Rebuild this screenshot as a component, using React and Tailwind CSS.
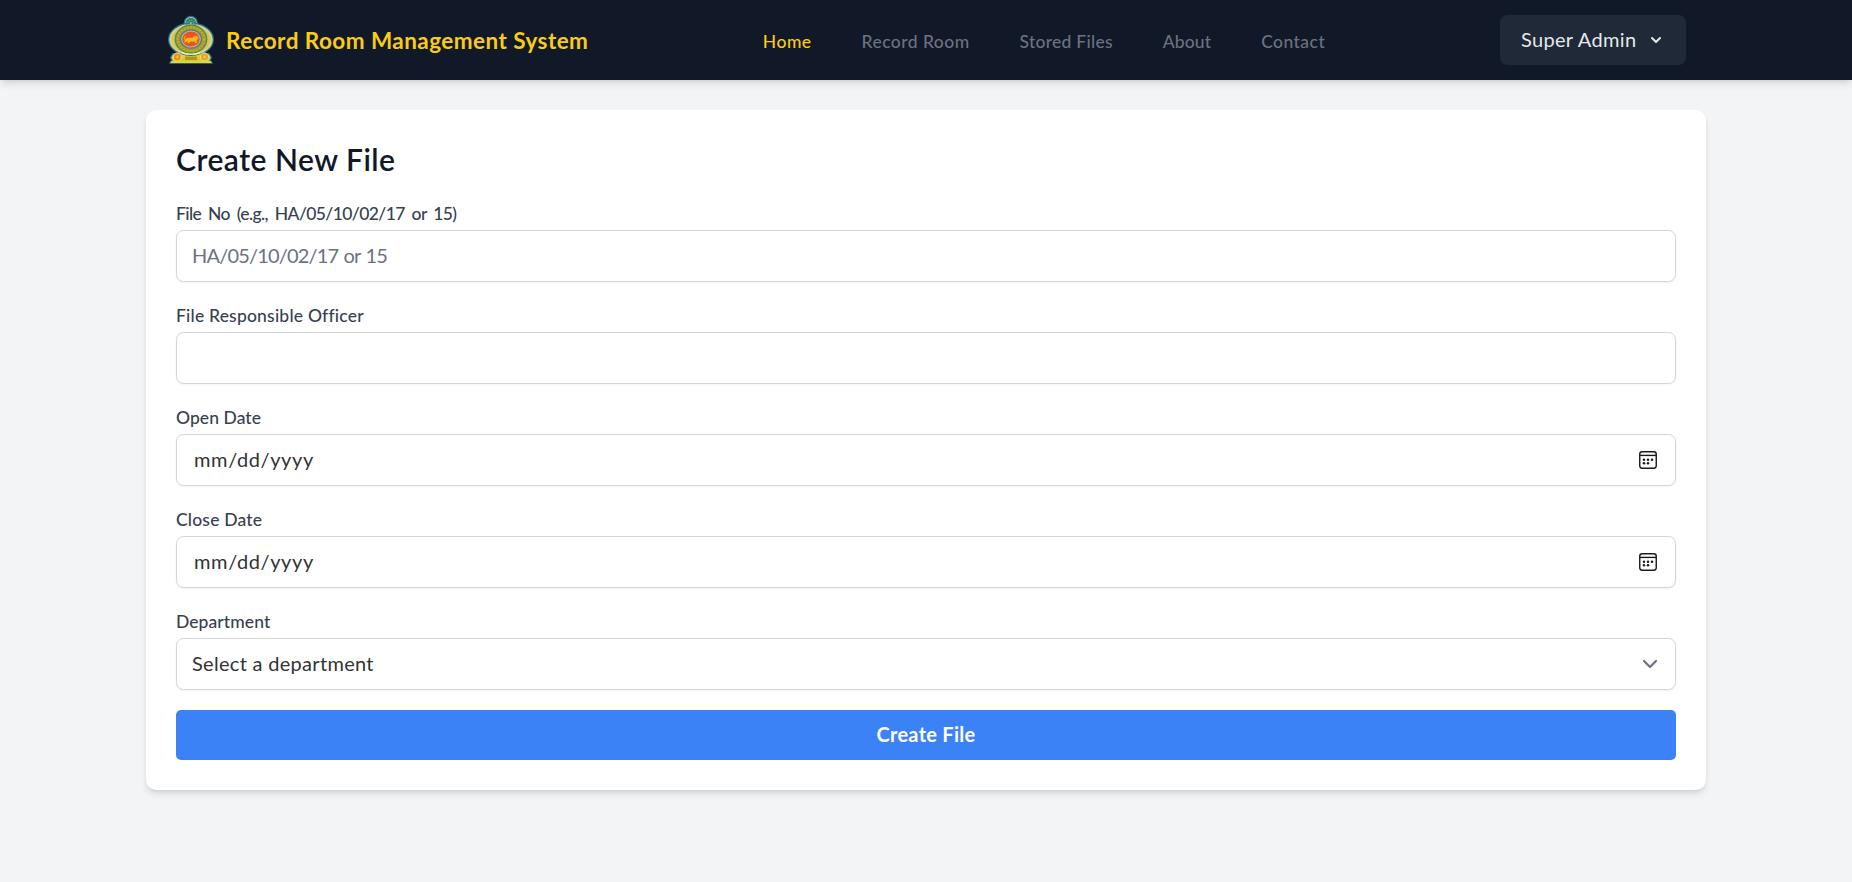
function Emblem() {
  return (
    <svg viewBox="0 0 50 50" className="h-[50px] w-[50px] shrink-0">
      <g stroke="#1d6f9c" strokeWidth="1.2">
        <circle cx="24.8" cy="8" r="6.6" fill="#d9cf6b" />
        <ellipse cx="25" cy="24.5" rx="22.4" ry="16.4" fill="#d2c766" />
        <path d="M4 48.2 6 45.6 4.6 42.5 7 38.5l7 .5 4 1.5h14l4-1.5 7-.5 2.4 4-1.4 3.1 2 2.6z" fill="#d9c93c" />
      </g>
      <circle cx="24.8" cy="8" r="5.3" fill="#2c7f86" />
      <circle cx="24.8" cy="8" r="3" fill="none" stroke="#a9b45a" strokeWidth=".9" strokeDasharray="1.2 1.1" />
      <circle cx="24.8" cy="8" r="1" fill="#b9bf5b" />
      <ellipse cx="25" cy="24.5" rx="20.4" ry="14.6" fill="none" stroke="#e2dba0" strokeWidth="1" />
      <ellipse cx="25" cy="24.2" rx="16.4" ry="14.6" fill="#4f8a55" />
      <ellipse cx="25" cy="24.2" rx="15.2" ry="13.4" fill="#9d9a2c" />
      <ellipse cx="25" cy="24.2" rx="13.2" ry="11.8" fill="none" stroke="#c2b022" strokeWidth="2.2" strokeDasharray="1.8 1.4" />
      <ellipse cx="25" cy="24" rx="11" ry="9.8" fill="#4d7f93" />
      <ellipse cx="25" cy="24" rx="9.8" ry="8.6" fill="#c5b7a5" />
      <ellipse cx="25" cy="24" rx="8.8" ry="7.5" fill="#e8541f" />
      <path d="M18.5 27.2c.6-2.4 1.2-3.9 3.2-4.2l4.8.1 2-2.2 3 .4.9 2.3-1.8 1.2.3 2.9h-1.8l-.6-1.4h-4l-1 1.4h-2l.5-1.6z" fill="#f5b91b" stroke="#f5b91b" strokeWidth=".5" />
      <path d="m18.8 24.7-.8-2.2 1.8-1.5" fill="none" stroke="#f5b91b" strokeWidth=".9" />
      <path d="M14.5 38.8c7 3 14 3 21 0l-2.8 3.7H17.3z" fill="#e6d52d" />
      <path d="M19 41.5h12v3.5H19z" fill="#a99a1e" />
      <path d="M16 37.6c6 2.2 12 2.2 18 0" fill="none" stroke="#f2edbd" strokeWidth="1.2" />
      <circle cx="11.3" cy="42" r="4.4" fill="#e9e3a0" />
      <circle cx="11.3" cy="42" r="3.5" fill="#e98a1c" />
      <circle cx="11.3" cy="42" r="1.7" fill="#f3b62a" />
      <circle cx="38.5" cy="42" r="4.4" fill="#e9e3a0" />
      <circle cx="38.5" cy="42" r="3.5" fill="#dda321" />
      <circle cx="38.5" cy="42" r="1.7" fill="#f0c52d" />
      <path d="M4.5 47.2h41" stroke="#ecd917" strokeWidth="1.8" />
    </svg>
  );
}

function CalendarIcon() {
  return (
    <svg viewBox="0 0 20 20" className="h-5 w-5 text-[#1a1a1a]" fill="none" stroke="currentColor">
      <rect x="1.75" y="1.75" width="16.5" height="16.5" rx="2.4" strokeWidth="1.4" />
      <path d="M1.75 5.4h16.5" strokeWidth="1.4" />
      <g fill="currentColor" stroke="none">
        <circle cx="6" cy="9.7" r="1.25" />
        <circle cx="10" cy="9.7" r="1.25" />
        <circle cx="14" cy="9.7" r="1.25" />
        <circle cx="6" cy="13.3" r="1.25" />
        <circle cx="10" cy="13.3" r="1.25" />
      </g>
    </svg>
  );
}

const box = "flex h-[52px] w-full items-center justify-between rounded-[7.5px] border border-[#d1d5db] bg-white text-[20px] text-[#333333] shadow-[0_1px_2.5px_0_rgba(0,0,0,0.05)]";

function Field({ label, spacing, children }) {
  return (
    <div className="mb-5">
      <div className={`mb-1 h-[26px] pt-px text-[17.5px] leading-[25px] font-medium text-[#374151] ${spacing}`}>{label}</div>
      {children}
    </div>
  );
}

function DateBox() {
  return (
    <div className={`${box} px-[17px]`}>
      <span className="pb-0.5 tracking-[0.62px]">mm/dd/yyyy</span>
      <CalendarIcon />
    </div>
  );
}

export default function App() {
  return (
    <div className="min-h-screen bg-[#f3f4f6] font-['Lato','Liberation_Sans',sans-serif]">
      <header className="relative h-20 bg-[#111827] shadow-[0_5px_7.5px_-1px_rgba(0,0,0,0.1),0_2.5px_5px_-2.5px_rgba(0,0,0,0.1)]">
        <div className="mx-auto flex h-full w-[1560px] items-center justify-between px-5">
          <div className="flex w-[422px] items-center gap-2.5">
            <Emblem />
            <span className="pt-0.5 text-[22.5px] leading-[30px] font-bold tracking-[0.45px] whitespace-nowrap text-[#facc15]">Record Room Management System</span>
          </div>
          <nav className="flex gap-[50px] pt-[3px] text-[17.5px] leading-[25px] font-medium whitespace-nowrap text-[#6b7280]">
            <a className="tracking-[0.5px] text-[#facc15]">Home</a>
            <a className="tracking-[0.44px]">Record Room</a>
            <a className="tracking-[0.26px]">Stored Files</a>
            <a className="tracking-[0.1px]">About</a>
            <a className="tracking-[0.45px]">Contact</a>
          </nav>
          <button className="flex h-[50px] w-[186px] items-center rounded-[7.5px] bg-[#1f2937] pl-[21px] text-[20px] text-[#e5e7eb]">
            <span className="pb-0.5 tracking-[0.33px] whitespace-nowrap">Super Admin</span>
            <svg viewBox="0 0 20 20" className="ml-[10px] h-5 w-5" fill="currentColor">
              <path fillRule="evenodd" clipRule="evenodd" d="M5.293 7.293a1 1 0 011.414 0L10 10.586l3.293-3.293a1 1 0 111.414 1.414l-4 4a1 1 0 01-1.414 0l-4-4a1 1 0 010-1.414z" />
            </svg>
          </button>
        </div>
      </header>
      <main className="pt-[30px]">
        <section className="mx-auto w-[1560px] rounded-[10px] bg-white p-[30px] shadow-[0_5px_7.5px_-1px_rgba(0,0,0,0.1),0_2.5px_5px_-2.5px_rgba(0,0,0,0.1)]">
          <h2 className="mb-5 h-10 text-[30px] leading-[38px] font-semibold tracking-[0.5px] text-[#111827]">Create New File</h2>
          <Field label="File No (e.g., HA/05/10/02/17 or 15)" spacing="tracking-[-0.6px] [word-spacing:3px]">
            <input className={`${box} px-[15px] pb-0.5 tracking-[-0.82px] [word-spacing:1px] placeholder:text-[#6b7280]`} placeholder="HA/05/10/02/17 or 15" />
          </Field>
          <Field label="File Responsible Officer" spacing="tracking-[0.2px]">
            <input className={`${box} px-[15px]`} />
          </Field>
          <Field label="Open Date" spacing="tracking-[0.06px]">
            <DateBox />
          </Field>
          <Field label="Close Date" spacing="tracking-[0.18px]">
            <DateBox />
          </Field>
          <Field label="Department" spacing="tracking-[0.08px]">
            <div className={`${box} pr-3 pl-[15px]`}>
              <span className="pb-0.5 tracking-[0.3px]">Select a department</span>
              <svg viewBox="0 0 20 20" className="h-[26px] w-[26px]" fill="none" stroke="#6b7280" strokeWidth="1.7" strokeLinecap="round" strokeLinejoin="round">
                <path d="m5.4 7.7 4.6 4.6 4.6-4.6" />
              </svg>
            </div>
          </Field>
          <button className="flex h-[50px] w-full items-center justify-center rounded-[5px] bg-[#3b82f6] pb-0.5 text-[20px] font-bold tracking-[0.28px] text-white">Create File</button>
        </section>
      </main>
    </div>
  );
}
